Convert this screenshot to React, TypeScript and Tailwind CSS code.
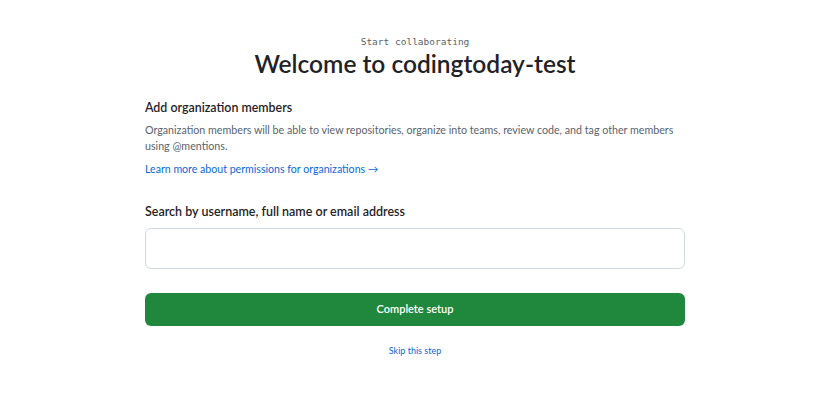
export default function App() {
  return (
    <div className="min-h-[398px] w-full bg-white pl-2 font-['Lato',sans-serif] text-[#1f2328]">
      <div className="mx-auto flex w-[540px] flex-col pt-[35px]">
        <div className="text-center font-['DejaVu_Sans_Mono',monospace] text-[9.5px] leading-[14px] text-[#59636e]">
          Start collaborating
        </div>
        <h1 className="text-center text-[24.5px] font-semibold leading-[30px]">
          Welcome to codingtoday-test
        </h1>
        <h2 className="mt-[19px] text-[12.4px] font-semibold leading-[20px]">Add organization members</h2>
        <p className="mt-[4px] text-[10.7px] leading-[16px] text-[#59636e]">
          Organization members will be able to view repositories, organize into teams, review code, and tag other members
          using @mentions.
        </p>
        <a href="#" className="mt-[7px] text-[10.6px] leading-[16px] text-[#0969da]">
          Learn more about permissions for organizations →
        </a>
        <label className="mt-[25px] text-[12.5px] font-semibold leading-[20px]">
          Search by username, full name or email address
        </label>
        <input
          type="text"
          className="mt-[6px] h-[41px] w-full rounded-[6px] border border-[#d1d9e0] bg-white px-3 outline-none"
        />
        <button className="mt-[24px] h-[33px] w-full rounded-[6px] bg-[#1f883d] text-[11px] font-semibold text-white">
          Complete setup
        </button>
        <a href="#" className="mt-[18px] text-center text-[9px] leading-[14px] text-[#0969da]">
          Skip this step
        </a>
      </div>
    </div>
  );
}
